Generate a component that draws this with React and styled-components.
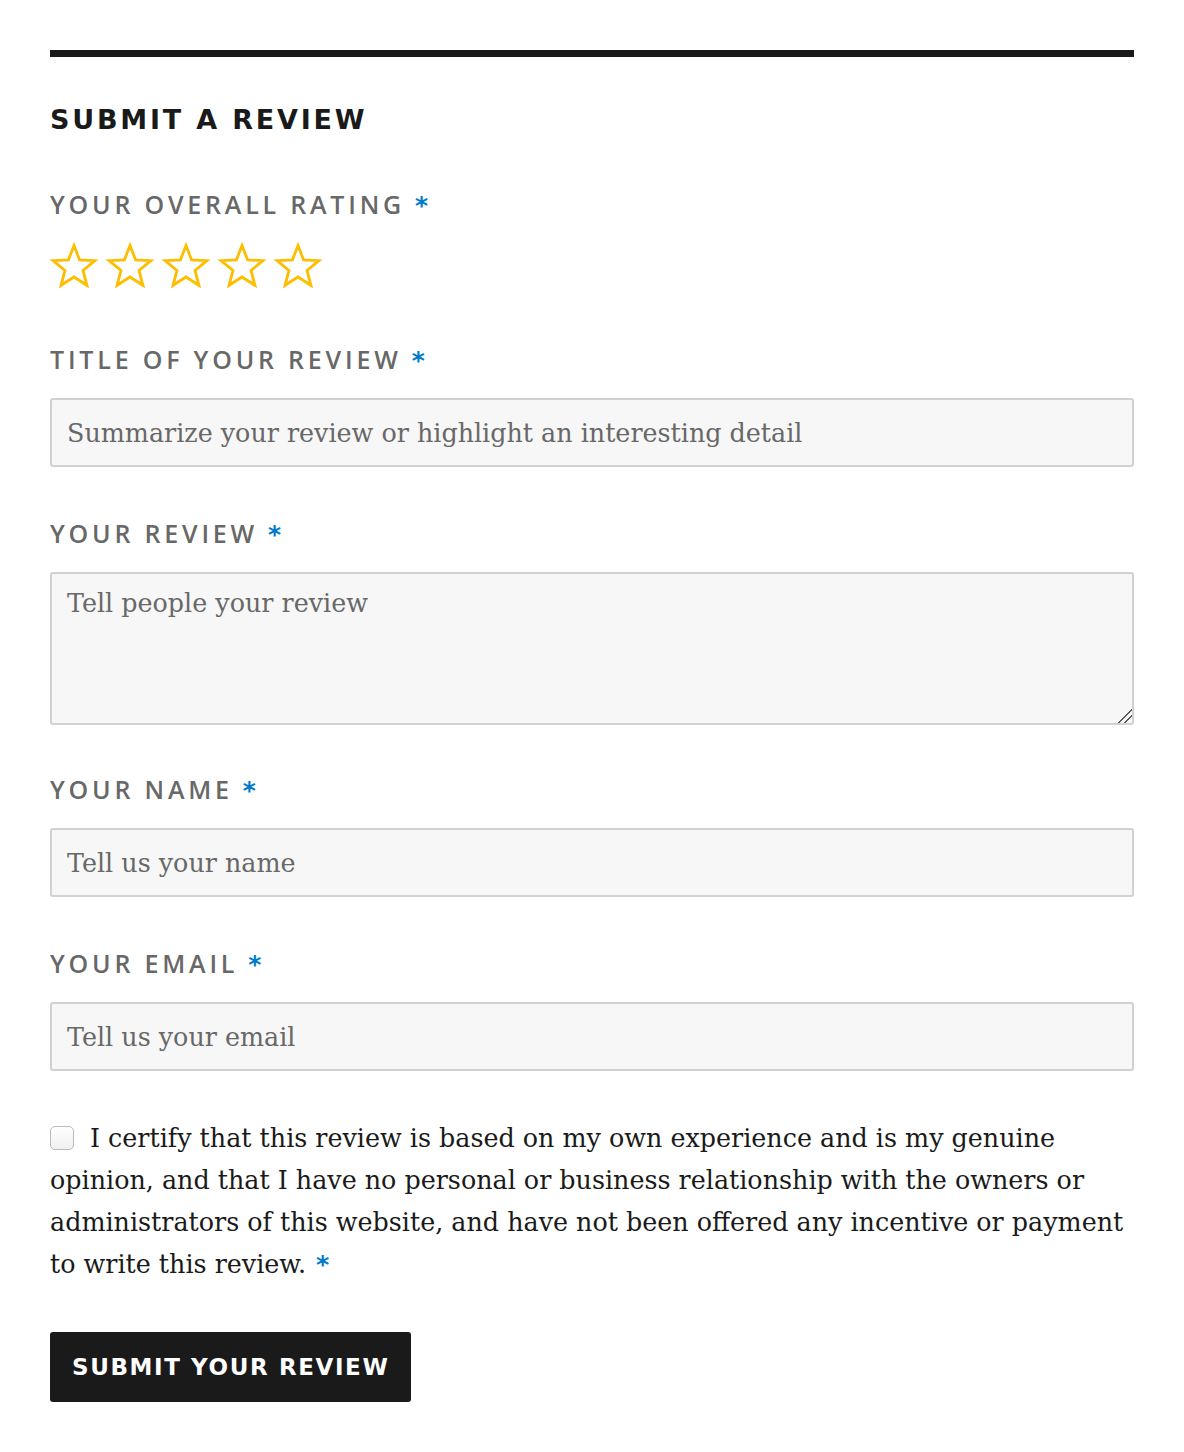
import styled, { createGlobalStyle } from 'styled-components';

const GlobalStyle = createGlobalStyle`
    body {
        margin: 0;
        background: #ffffff;
        font-family: "DejaVu Serif", serif;
    }
`;

const Page = styled.div`
    padding: 50px 50px 50px;
`;

const Rule = styled.div`
    height: 7px;
    background-color: #1a1a1a;
`;

const Heading = styled.h2`
    margin: 46px 0 0;
    font-family: "DejaVu Sans", sans-serif;
    font-weight: 700;
    font-size: 27px;
    line-height: 34px;
    letter-spacing: 2.8px;
    color: #1a1a1a;
`;

const Field = styled.div`
    margin-top: ${(props) => props.$gap}px;
`;

const Label = styled.label`
    display: block;
    font-family: "Open Sans", sans-serif;
    font-weight: 600;
    font-size: 25px;
    line-height: 30px;
    letter-spacing: 3.8px;
    color: #686868;
    margin-bottom: ${(props) => props.$space}px;
`;

const Required = styled.span`
    color: #007acc;
    font-family: "DejaVu Sans", sans-serif;
    font-weight: 700;
    margin-left: 10px;
`;

const Stars = styled.div`
    display: flex;
    gap: 8px;
`;

const Input = styled.input`
    display: block;
    width: 100%;
    height: 69px;
    box-sizing: border-box;
    padding: 0 15px;
    background-color: #f7f7f7;
    border: 2px solid #d1d1d1;
    border-radius: 3px;
    font-family: "DejaVu Serif", serif;
    font-size: 25.4px;
    color: #1a1a1a;

    &::placeholder {
        color: #686868;
    }
`;

const TextArea = styled.textarea`
    display: block;
    width: 100%;
    height: 153px;
    box-sizing: border-box;
    padding: 12px 15px;
    background-color: #f7f7f7;
    border: 2px solid #d1d1d1;
    border-radius: 3px;
    font-family: "DejaVu Serif", serif;
    font-size: 25.4px;
    line-height: 34px;
    color: #1a1a1a;
    resize: vertical;

    &::placeholder {
        color: #686868;
    }

    &::-webkit-resizer {
        background:
            linear-gradient(135deg, transparent 52%, #5a5a5a 52%, #5a5a5a 60%, transparent 60%, transparent 72%, #5a5a5a 72%, #5a5a5a 80%, transparent 80%);
    }
`;

const Certify = styled.p`
    margin: 46px 0 0;
    font-size: 25.4px;
    line-height: 42px;
    color: #1a1a1a;
`;

const Checkbox = styled.input`
    appearance: none;
    width: 24px;
    height: 24px;
    margin: 0 16px 0 0;
    vertical-align: -3px;
    border: 1px solid #b9b9b9;
    border-radius: 5px;
    background: linear-gradient(#ffffff, #f0f0f0);
`;

const Button = styled.button`
    margin-top: 47px;
    height: 70px;
    padding: 0 22px;
    border: none;
    border-radius: 3px;
    background-color: #1a1a1a;
    color: #ffffff;
    font-family: "DejaVu Sans", sans-serif;
    font-weight: 700;
    font-size: 23px;
    letter-spacing: 1.6px;
    cursor: pointer;
`;

function Star() {
    return (
        <svg width="48" height="48" viewBox="0 0 48 48" overflow="visible">
            <path
                d="M24 4.5 L29.58 18.81 L44.92 19.7 L33.04 29.44 L36.93 44.3 L24 36 L11.07 44.3 L14.96 29.44 L3.08 19.7 L18.42 18.81 Z"
                fill="none"
                stroke="#fdbe00"
                strokeWidth="2.8"
            />
        </svg>
    );
}

export default function App() {
    return (
        <Page>
            <GlobalStyle />
            <Rule />
            <Heading>SUBMIT A REVIEW</Heading>

            <Field $gap={52}>
                <Label $space={20}>YOUR OVERALL RATING<Required>*</Required></Label>
                <Stars>
                    {[1, 2, 3, 4, 5].map((n) => (
                        <Star key={n} />
                    ))}
                </Stars>
            </Field>

            <Field $gap={55}>
                <Label htmlFor="title" $space={22}>TITLE OF YOUR REVIEW<Required>*</Required></Label>
                <Input id="title" placeholder="Summarize your review or highlight an interesting detail" />
            </Field>

            <Field $gap={51}>
                <Label htmlFor="review" $space={22}>YOUR REVIEW<Required>*</Required></Label>
                <TextArea id="review" placeholder="Tell people your review" />
            </Field>

            <Field $gap={49}>
                <Label htmlFor="name" $space={22}>YOUR NAME<Required>*</Required></Label>
                <Input id="name" placeholder="Tell us your name" />
            </Field>

            <Field $gap={51}>
                <Label htmlFor="email" $space={22}>YOUR EMAIL<Required>*</Required></Label>
                <Input id="email" placeholder="Tell us your email" />
            </Field>

            <Certify>
                <Checkbox type="checkbox" />
                I certify that this review is based on my own experience and is my genuine opinion, and that I have no personal or business relationship with the owners or administrators of this website, and have not been offered any incentive or payment to write this review.
                <Required>*</Required>
            </Certify>

            <Button type="submit">SUBMIT YOUR REVIEW</Button>
        </Page>
    );
}
